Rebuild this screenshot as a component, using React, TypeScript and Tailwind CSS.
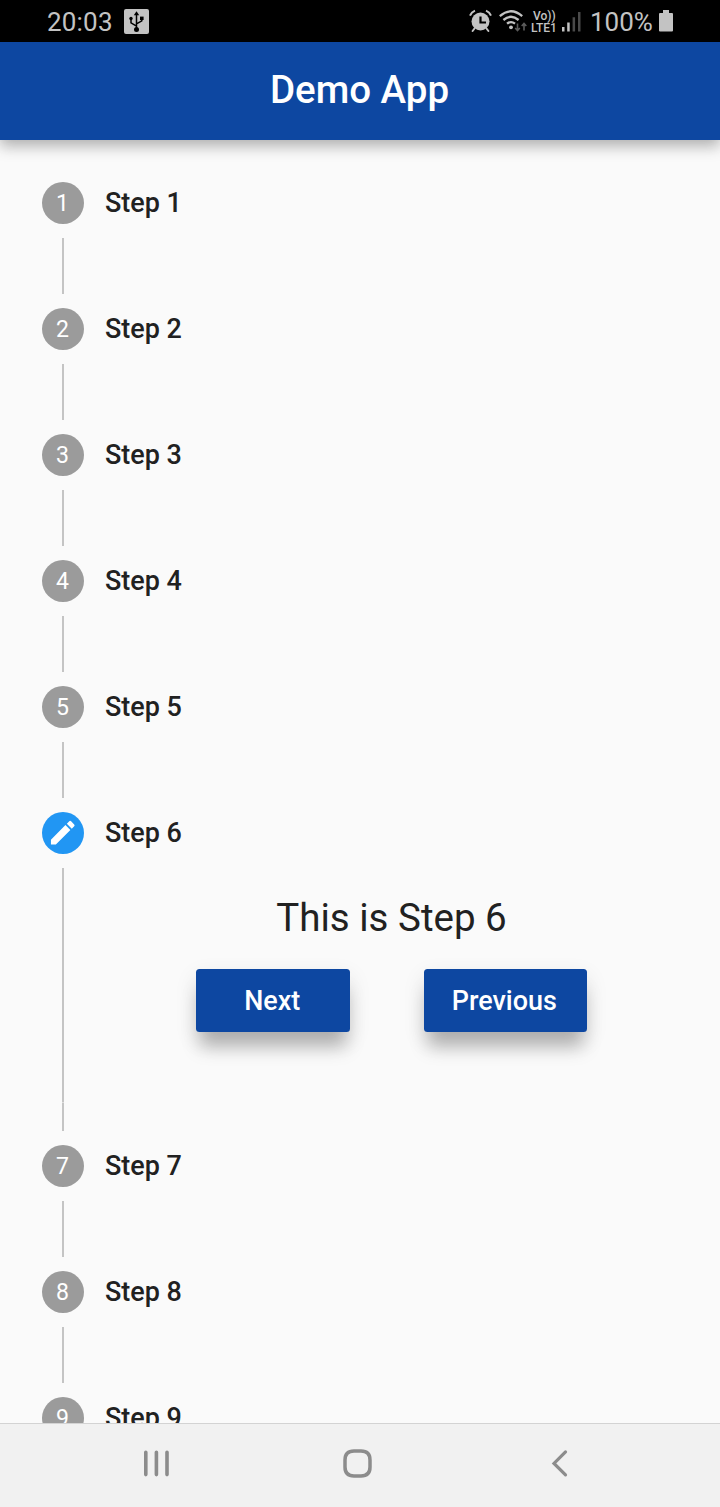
import React from "react";

function UsbIcon() {
  return (
    <svg className="ml-[11px] h-[25px] w-[25px]" viewBox="0 0 25 25" fill="none">
      <rect width="25" height="25" rx="2" fill="#c3c3c3" />
      <path d="M12.500 5v15M12.500 17.200l-5.500-3.400V9.500M12.500 14.800l5.300-3V9" stroke="#000" strokeWidth="1.500" />
      <path d="M9.800 6.200 12.500 2.200l2.700 4z" fill="#000" />
      <circle cx="12.500" cy="20.600" r="2.500" fill="#000" />
      <circle cx="7" cy="9.500" r="1.700" fill="#000" />
      <rect x="16" y="7.600" width="3.600" height="3.400" fill="#000" />
    </svg>
  );
}

function AlarmIcon() {
  return (
    <svg className="h-[24px] w-[24px]" viewBox="0 0 24 24" fill="none">
      <circle cx="11.500" cy="12.500" r="9" fill="#c3c3c3" />
      <path d="M5.500 19.500 3.600 22M17.500 19.500l1.900 2.500" stroke="#c3c3c3" strokeWidth="2" strokeLinecap="round" />
      <path d="M1 6.600Q2.500 3 6 1.600M22 6.600Q20.500 3 17 1.600" stroke="#c3c3c3" strokeWidth="2" />
      <path d="M11.500 7.500v6h5.500" stroke="#000" strokeWidth="2.200" />
    </svg>
  );
}

function WifiIcon() {
  return (
    <svg className="ml-[6px] h-[24px] w-[28px]" viewBox="0 0 28 24" fill="none">
      <path d="M.8 7.200Q12 -2.600 23.200 7.200M4.400 11Q12 4.600 19.600 11M8 14.700Q12 11.500 16 14.700" stroke="#c3c3c3" strokeWidth="2.300" />
      <circle cx="12" cy="18.300" r="1.900" fill="#c3c3c3" />
      <path d="M18.500 14.500v7M16.200 19l2.300 2.500 2.300-2.500M25 21.500v-7M22.700 17l2.300-2.500 2.300 2.500" stroke="#5c5c5c" strokeWidth="1.600" />
    </svg>
  );
}

function SignalIcon() {
  return (
    <svg className="ml-[3px] h-[24px] w-[19px]" viewBox="0 0 19 24">
      <path d="M0 18h2.500v4.500H0zM5.200 13.500h2.500v9H5.200z" fill="#c3c3c3" />
      <path d="M10.600 8.200h2.500v14.300h-2.500zM16 3h2.500v19.500H16z" fill="#4a4a4a" />
    </svg>
  );
}

function StatusBar() {
  return (
    <div className="flex h-[42px] shrink-0 items-center bg-black pl-[47px] pr-[47px] text-[#c3c3c3]">
      <span className="pt-[2px] text-[26px] leading-none tracking-[0.2px]">20:03</span>
      <UsbIcon />
      <div className="ml-auto flex items-center">
        <AlarmIcon />
        <WifiIcon />
        <div className="ml-[4px] flex w-[28px] flex-col pt-px text-[12px] font-medium leading-[12px]">
          <span className="pl-[2px]">Vo))</span>
          <span>LTE1</span>
        </div>
        <SignalIcon />
        <span className="ml-[9px] w-[67px] whitespace-nowrap pt-[2px] text-[26px] leading-none">100%</span>
        <svg className="ml-[2px] h-[22px] w-[14px]" viewBox="0 0 14 22" fill="#c3c3c3">
          <path d="M4 0h6v3h3a1 1 0 0 1 1 1v16.500a1 1 0 0 1-1 1H1a1 1 0 0 1-1-1V4a1 1 0 0 1 1-1h3z" />
        </svg>
      </div>
    </div>
  );
}

function StepHeader({ step, active = false }: { step: number; active?: boolean }) {
  return (
    <div className="flex h-[42px] items-center gap-[21px]">
      <div
        className={
          active
            ? "flex size-[42px] items-center justify-center rounded-full bg-[#2196f3]"
            : "flex size-[42px] items-center justify-center rounded-full bg-[#9b9b9b]"
        }
      >
        {active ? (
          <svg className="size-[31.500px]" viewBox="0 0 24 24" fill="#fff">
            <path d="M3 17.250V21h3.750L17.810 9.940l-3.750-3.750L3 17.250zM20.710 7.040a1 1 0 0 0 0-1.410l-2.340-2.340a1 1 0 0 0-1.410 0l-1.830 1.830 3.750 3.750 1.830-1.830z" />
          </svg>
        ) : (
          <span className="pr-px pt-[2px] text-[23.100px] leading-none text-white">{step}</span>
        )}
      </div>
      <span className="text-[26.950px] font-medium leading-none text-[#212121]">Step {step}</span>
    </div>
  );
}

function StepButton({ label, className }: { label: string; className: string }) {
  return (
    <button
      className={`flex h-[63px] items-center justify-center rounded-[3.500px] bg-[#0d47a1] pr-[2px] pt-px text-[26.950px] font-medium leading-none text-white shadow-[0_19px_17px_-4px_rgba(0,0,0,0.25),0_8px_22px_1px_rgba(0,0,0,0.09)] ${className}`}
    >
      {label}
    </button>
  );
}

function ActiveContent() {
  return (
    <div className="flex h-[263px]">
      <div className="ml-[20px] flex w-[2px] flex-col bg-[#c4c4c4]">
        <div className="mt-[234px] h-px bg-[#dedede]" />
      </div>
      <div className="ml-[41px] flex w-[573px] flex-col items-center">
        <p className="mt-[27px] text-[38.500px] leading-[45px] text-[#212121]">This is Step 6</p>
        <div className="mt-[29.400px] flex gap-[73.500px]">
          <StepButton label="Next" className="w-[154px]" />
          <StepButton label="Previous" className="w-[163px]" />
        </div>
      </div>
    </div>
  );
}

function NavigationBar() {
  return (
    <div className="flex h-[84px] shrink-0 items-start border-t border-[#d3d3d3] bg-[#f1f1f1] pl-[143px] pt-[24px]">
      <svg className="h-[30px] w-[27px]" viewBox="0 0 27 30" fill="none" stroke="#8c8c8c" strokeWidth="3.600" strokeLinecap="round">
        <path d="M2.800 4.200v22.400M13.400 4.200v22.400M24 4.200v22.400" />
      </svg>
      <svg className="ml-[172px] h-[30px] w-[31px]" viewBox="0 0 31 30" fill="none" stroke="#8c8c8c" strokeWidth="3.500">
        <path d="M12 2.900h7Q28 2.900 28 11.900v7Q28 27.900 19 27.900h-7Q3 27.900 3 18.900v-7Q3 2.900 12 2.900z" />
      </svg>
      <svg className="ml-[177px] h-[30px] w-[19px]" viewBox="0 0 19 30" fill="none" stroke="#8c8c8c" strokeWidth="3.200" strokeLinecap="round">
        <path d="M15.500 3.900 4 15.400l11.500 11.500" />
      </svg>
    </div>
  );
}

export default function App() {
  return (
    <div className="flex h-[1507px] w-[720px] flex-col overflow-hidden bg-[#fafafa] font-['Roboto',sans-serif]">
      <StatusBar />
      <header className="z-10 flex h-[98px] shrink-0 items-center justify-center bg-[#0d47a1] pb-[2px] pr-px text-[38.500px] font-medium leading-none text-white shadow-[0_7px_14px_0_rgba(0,0,0,0.22),0_2px_14px_0_rgba(0,0,0,0.12)]">
        Demo App
      </header>
      <main className="flex min-h-0 grow flex-col overflow-hidden px-[42px] pt-[42px]">
        {[1, 2, 3, 4, 5, 6, 7, 8, 9].map((step) => (
          <div key={step} className="flex shrink-0 flex-col gap-[14px] pb-[14px]">
            <StepHeader step={step} active={step === 6} />
            {step === 6 ? <ActiveContent /> : <div className="ml-[20px] h-[56px] w-[2px] bg-[#c4c4c4]" />}
          </div>
        ))}
      </main>
      <NavigationBar />
    </div>
  );
}
